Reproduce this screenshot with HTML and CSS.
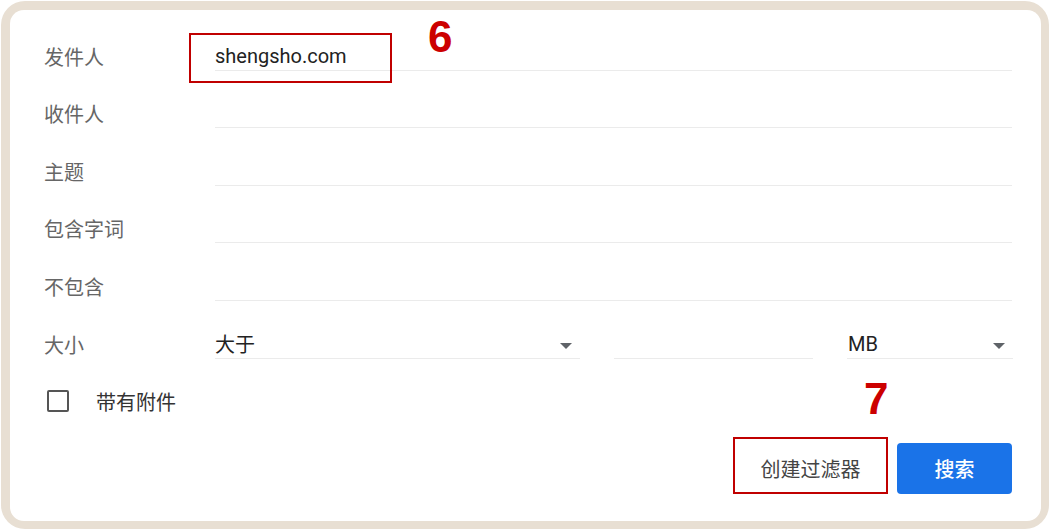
FILE: index.html
```html
<!DOCTYPE html>
<html lang="zh-CN">
<head>
    <meta charset="UTF-8">
    <title>搜索过滤器</title>
    <link rel="stylesheet" href="styles.css">
</head>
<body>
    <div class="frame">
        <form class="card">
            <div class="row">
                <label class="label">发件人</label>
                <div class="field">shengsho.com</div>
            </div>
            <div class="row">
                <label class="label">收件人</label>
                <div class="field"></div>
            </div>
            <div class="row">
                <label class="label">主题</label>
                <div class="field"></div>
            </div>
            <div class="row">
                <label class="label">包含字词</label>
                <div class="field"></div>
            </div>
            <div class="row">
                <label class="label">不包含</label>
                <div class="field"></div>
            </div>
            <div class="row">
                <label class="label">大小</label>
                <div class="size-group">
                    <div class="field select select-compare">大于<span class="arrow"></span></div>
                    <div class="field select-value"></div>
                    <div class="field select select-unit">MB<span class="arrow"></span></div>
                </div>
            </div>
            <div class="row check-row">
                <span class="checkbox"></span>
                <span class="check-label">带有附件</span>
            </div>
            <div class="actions">
                <button type="button" class="btn btn-plain">创建过滤器</button>
                <button type="button" class="btn btn-primary">搜索</button>
            </div>

            <!-- annotations -->
            <span class="mark mark-from"></span>
            <span class="num num-6">6</span>
            <span class="mark mark-filter"></span>
            <span class="num num-7">7</span>
        </form>
    </div>
</body>
</html>
```

FILE: styles.css
```css
body {
    margin: 0;
    background-color: #fff;
    font-family: Roboto, "Noto Sans CJK SC", sans-serif;
}

.frame {
    width: 1048px;
    height: 528px;
    margin: 1px;
    padding: 9px 8px 8px 9px;
    box-sizing: border-box;
    background-color: #e8dfd3;
    border-radius: 24px;
}

.card {
    position: relative;
    height: 100%;
    box-sizing: border-box;
    background-color: #fff;
    border-radius: 14px;
    padding: 3px 29px 0 34px;
}

.row {
    display: flex;
    align-items: flex-end;
    height: 57.6px;
}

.label {
    width: 171px;
    flex-shrink: 0;
    height: 29px;
    display: flex;
    align-items: center;
    font-size: 20px;
    color: #666;
}

.field {
    flex: 1;
    height: 28px;
    display: flex;
    align-items: center;
    border-bottom: 1px solid #ebebeb;
    font-size: 20px;
    color: #222;
}

.size-group {
    flex: 1;
    display: flex;
    gap: 34px;
}

.select {
    position: relative;
}

.select-compare {
    flex: 0 0 365px;
}

.select-value {
    flex: 0 0 199px;
}

.select-unit {
    flex: 0 0 165px;
    padding-left: 1px;
}

.arrow {
    position: absolute;
    right: 8px;
    top: 13px;
    width: 0;
    height: 0;
    border-left: 6px solid transparent;
    border-right: 6px solid transparent;
    border-top: 6px solid #5f6368;
}

.check-row {
    padding-left: 3px;
}

.checkbox {
    width: 18px;
    height: 18px;
    border: 2px solid #555;
    border-radius: 2px;
    margin-bottom: 4px;
}

.check-label {
    margin-left: 27px;
    height: 29px;
    display: flex;
    align-items: center;
    font-size: 20px;
    color: #333;
}

.actions {
    display: flex;
    justify-content: flex-end;
    gap: 11px;
    margin-top: 27px;
}

.btn {
    height: 51px;
    border: none;
    border-radius: 4px;
    font-family: Roboto, "Noto Sans CJK SC", sans-serif;
    font-size: 20px;
    cursor: pointer;
}

.btn-plain {
    width: 151px;
    background: #fff;
    color: #444;
}

.btn-primary {
    width: 115px;
    background-color: #1a73e8;
    color: #fff;
    font-weight: 500;
}

/* red annotation overlays */
.mark {
    position: absolute;
    border: 2px solid #c00000;
}

.mark-from {
    left: 179px;
    top: 23px;
    width: 199px;
    height: 46px;
}

.mark-filter {
    left: 723px;
    top: 427px;
    width: 151px;
    height: 53px;
}

.num {
    position: absolute;
    font-family: "Liberation Sans", Arial, sans-serif;
    font-weight: bold;
    font-size: 44px;
    line-height: 1;
    color: #cc0000;
}

.num-6 {
    left: 418px;
    top: 5px;
}

.num-7 {
    left: 854px;
    top: 367px;
}
```
